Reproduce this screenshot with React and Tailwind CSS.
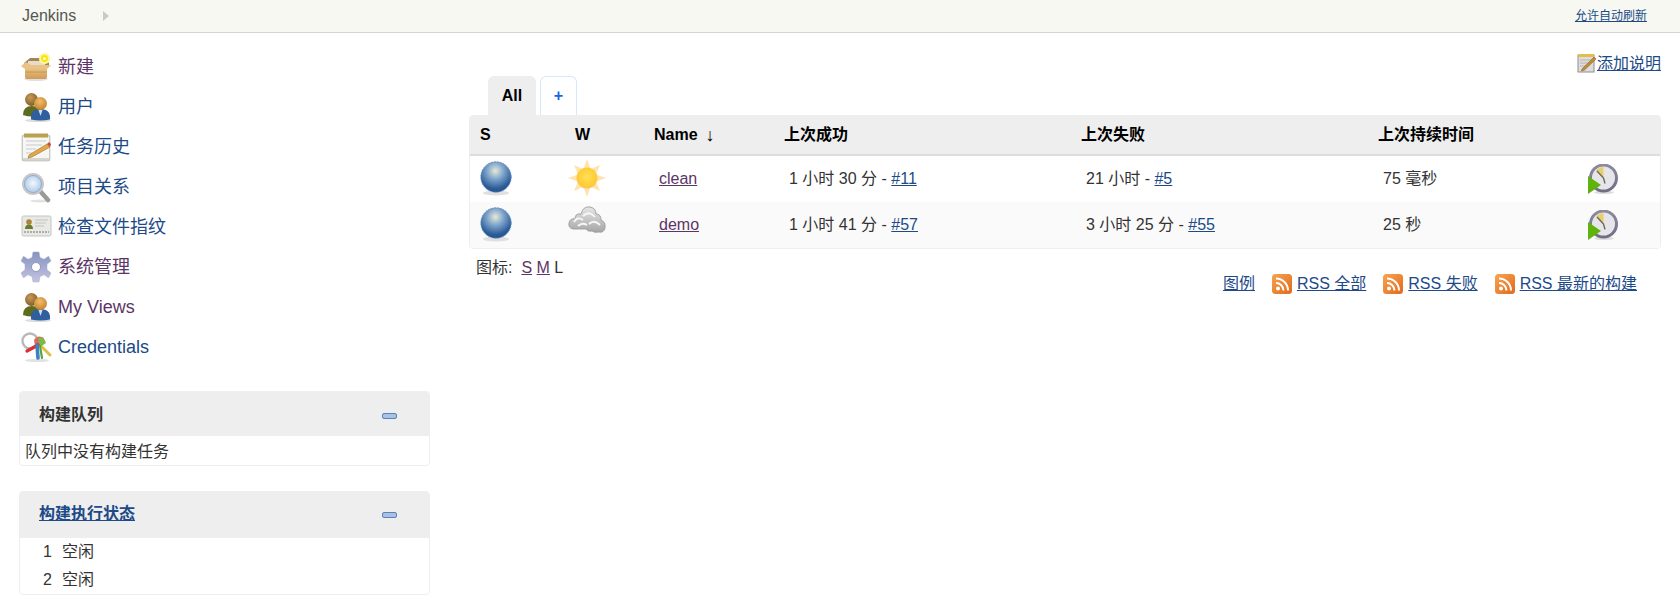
const blue = "text-[#204a87]";
const purple = "text-[#5c3566]";
const rowGrid = "grid grid-cols-[90px_79px_130px_298px_297px_1fr]";

function BoxIcon() {
  return (
    <svg width="32" height="32" viewBox="0 0 32 32">
      <defs>
        <linearGradient id="boxFront" x1="0" y1="0" x2="0" y2="1">
          <stop offset="0" stopColor="#efc988" />
          <stop offset="1" stopColor="#cf9c58" />
        </linearGradient>
      </defs>
      <ellipse cx="16" cy="28" rx="12" ry="2" fill="#e0e0e0" />
      <path d="M4 12 L10 7 H24 L29 12 V15 H4 Z" fill="#a88455" />
      <path d="M8 10 H25 V14 H8 Z" fill="#e6dccb" />
      <path d="M5 15 H27 V26 Q27 28 25 28 H7 Q5 28 5 26 Z" fill="url(#boxFront)" />
      <path d="M1 15 L6 11 L11 14 H26 L31 14.5 L27 18 H5 Z" fill="#e9c286" />
      <path d="M5 21 H27" stroke="#bd8f50" strokeWidth="0.8" />
      <circle cx="24.5" cy="7.5" r="5.5" fill="#fff59a" />
      <circle cx="24.5" cy="7.5" r="3.4" fill="#f7e600" />
      <circle cx="24.5" cy="7.5" r="1.5" fill="#fffde0" />
    </svg>
  );
}

function UsersIcon() {
  return (
    <svg width="32" height="32" viewBox="0 0 32 32">
      <defs>
        <radialGradient id="headBack" cx="0.4" cy="0.35" r="0.7">
          <stop offset="0" stopColor="#c69a5a" />
          <stop offset="1" stopColor="#805a24" />
        </radialGradient>
        <radialGradient id="headFront" cx="0.45" cy="0.35" r="0.7">
          <stop offset="0" stopColor="#f3bd6c" />
          <stop offset="1" stopColor="#c07f25" />
        </radialGradient>
      </defs>
      <ellipse cx="18" cy="29.5" rx="13" ry="1.6" fill="#ddd" />
      <path d="M3 24 Q3 15 12 15 Q20 15 20 24 Q12 27 3 24 Z" fill="#5c6b1d" />
      <circle cx="11.5" cy="8.5" r="6.5" fill="url(#headBack)" />
      <path d="M11 28.5 Q10 18 20.5 18 Q31 18 30 28.5 Q20 30.5 11 28.5 Z" fill="#2f5f9e" />
      <path d="M18.5 19 L20.5 25 L22.5 19 Z" fill="#cfe0f2" />
      <circle cx="20.5" cy="12.5" r="6.5" fill="url(#headFront)" />
    </svg>
  );
}

function NotepadIcon() {
  return (
    <svg width="32" height="32" viewBox="0 0 32 32">
      <rect x="2" y="4" width="28" height="26" rx="1.5" fill="#d5d5d0" stroke="#b5b5b0" strokeWidth="0.6" />
      <rect x="3" y="6" width="26" height="21" fill="#f6f6f4" />
      <rect x="4" y="2.5" width="24" height="4" fill="#b8a24e" />
      <path d="M6 10 H26 M6 14 H22 M6 18 H16 M6 22 H12" stroke="#c9c9c9" strokeWidth="1" />
      <path d="M9 24 L27 13 L30 16 L12 26 L8 27 Z" fill="#e0a84a" stroke="#9a6e28" strokeWidth="0.6" />
      <path d="M27 13 L30 16 L31 13 L29 11 Z" fill="#cf4a3c" />
    </svg>
  );
}

function SearchIcon() {
  return (
    <svg width="32" height="32" viewBox="0 0 32 32">
      <defs>
        <radialGradient id="lens" cx="0.5" cy="0.45" r="0.6">
          <stop offset="0" stopColor="#f3f8fd" />
          <stop offset="1" stopColor="#a9c6e6" />
        </radialGradient>
      </defs>
      <ellipse cx="20" cy="30" rx="10" ry="1.4" fill="#e2e2e2" />
      <path d="M20 20 L28 29" stroke="#9a9a9a" strokeWidth="4.5" strokeLinecap="round" />
      <circle cx="13" cy="13" r="11" fill="#c8c8c8" />
      <circle cx="13" cy="13" r="8.5" fill="url(#lens)" stroke="#7fa4d0" strokeWidth="0.8" />
    </svg>
  );
}

function CardIcon() {
  return (
    <svg width="32" height="32" viewBox="0 0 32 32">
      <rect x="2" y="5" width="29" height="20" rx="1.5" fill="#e8e8e4" stroke="#c4c4c0" strokeWidth="1" />
      <circle cx="9" cy="11" r="2.8" fill="#a9853c" />
      <path d="M5 18 Q5 13.5 9 13.5 Q13 13.5 13 18 Z" fill="#6c7a2a" />
      <path d="M15 9 H28 M15 12 H26 M15 15 H24" stroke="#c4c4c4" strokeWidth="1" />
      <path d="M4 21 H29" stroke="#9a9a9a" strokeWidth="1.6" strokeDasharray="2 1" />
    </svg>
  );
}

function GearIcon() {
  return (
    <svg width="32" height="32" viewBox="0 0 32 32">
      <defs>
        <linearGradient id="gearFill" x1="0" y1="0" x2="0" y2="1">
          <stop offset="0" stopColor="#8593bf" />
          <stop offset="1" stopColor="#c4c4e0" />
        </linearGradient>
      </defs>
      <path
        d="M13 1 H19 L20 6.5 L24 8.3 L28.5 5.2 L31 10 L27 13.3 V18.7 L31 22 L28.5 26.8 L24 23.7 L20 25.5 L19 31 H13 L12 25.5 L8 23.7 L3.5 26.8 L1 22 L5 18.7 V13.3 L1 10 L3.5 5.2 L8 8.3 L12 6.5 Z"
        fill="url(#gearFill)"
        stroke="#a5abcc"
        strokeWidth="0.5"
        strokeLinejoin="round"
      />
      <circle cx="16" cy="16" r="4.5" fill="#fff" stroke="#7f88b0" strokeWidth="0.8" />
    </svg>
  );
}

function KeysIcon() {
  return (
    <svg width="32" height="32" viewBox="0 0 32 32">
      <ellipse cx="17" cy="29.5" rx="12" ry="1.6" fill="#e2e2e2" />
      <circle cx="10" cy="10" r="7.5" fill="none" stroke="#b9b9b9" strokeWidth="2.4" />
      <path d="M19 13 L30 24" stroke="#d8c24a" strokeWidth="3" strokeLinecap="round" />
      <path d="M14 9 Q18 3 24 7 L21 15 L15 15 Z" fill="#d96a5c" />
      <path d="M18 7 Q24 5 26 12 L20 16 Z" fill="#7cb948" />
      <path d="M18 14 L7 20" stroke="#d92f2f" strokeWidth="3.2" strokeLinecap="round" />
      <path d="M17 14 L18 27" stroke="#3f7fc4" strokeWidth="3.6" strokeLinecap="round" />
      <path d="M20 15 L22 27" stroke="#5aa63c" strokeWidth="2.2" strokeLinecap="round" />
    </svg>
  );
}

function BallIcon() {
  return (
    <svg width="32" height="36" viewBox="0 0 32 36" className="block">
      <defs>
        <radialGradient id="ball" cx="0.48" cy="0.3" r="0.72">
          <stop offset="0" stopColor="#e6ead8" />
          <stop offset="0.4" stopColor="#7ba1ca" />
          <stop offset="0.8" stopColor="#2c5d9a" />
          <stop offset="1" stopColor="#234f88" />
        </radialGradient>
      </defs>
      <ellipse cx="16" cy="32" rx="13" ry="2.5" fill="#e0e0e0" />
      <circle cx="16" cy="16" r="15.2" fill="url(#ball)" stroke="#6f92bd" strokeWidth="1" strokeDasharray="2 1" />
    </svg>
  );
}

function SunIcon() {
  return (
    <svg width="38" height="38" viewBox="0 0 38 38" className="block">
      <defs>
        <radialGradient id="sun" cx="0.5" cy="0.45" r="0.55">
          <stop offset="0" stopColor="#ffe05a" />
          <stop offset="0.8" stopColor="#ffcc33" />
          <stop offset="1" stopColor="#fbc060" />
        </radialGradient>
      </defs>
      <g fill="#ffe3ab">
        <path d="M19 0 L22.5 10 H15.5 Z" />
        <path d="M19 38 L22.5 28 H15.5 Z" />
        <path d="M0 19 L10 15.5 V22.5 Z" />
        <path d="M38 19 L28 15.5 V22.5 Z" />
        <path d="M6 6 L15 10 L10 15 Z" />
        <path d="M32 6 L23 10 L28 15 Z" />
        <path d="M6 32 L15 28 L10 23 Z" />
        <path d="M32 32 L23 28 L28 23 Z" />
      </g>
      <circle cx="19" cy="19" r="10.5" fill="url(#sun)" />
    </svg>
  );
}

function CloudIcon() {
  return (
    <svg width="38" height="30" viewBox="0 0 38 30" className="block">
      <defs>
        <linearGradient id="cloud" x1="0" y1="0" x2="0" y2="1">
          <stop offset="0" stopColor="#e6e6e6" />
          <stop offset="1" stopColor="#a6a6a6" />
        </linearGradient>
      </defs>
      <path
        d="M5 24 Q0 23 1 18 Q2 13 7 14 Q7 8 13 9 Q15 1 22 2 Q28 3 28 9 Q33 9 33 15 Q38 17 37 23 Q36 28 31 27 Q26 28 24 26 Q20 27 18 24 Z"
        fill="url(#cloud)"
        stroke="#9d9d9d"
        strokeWidth="0.9"
      />
      <path d="M6 17 Q9 11 15 15 M15 11 Q21 5 27 12 M10 21 Q14 17 19 20 M21 19 Q26 14 32 20" fill="none" stroke="#f7f7f7" strokeWidth="1.8" />
    </svg>
  );
}

function ClockPlayIcon() {
  return (
    <svg width="30" height="31" viewBox="0 0 30 31" className="block">
      <defs>
        <linearGradient id="clockRing" x1="0" y1="0" x2="0" y2="1">
          <stop offset="0" stopColor="#8c8ba0" />
          <stop offset="1" stopColor="#6f6e84" />
        </linearGradient>
      </defs>
      <ellipse cx="16" cy="28.5" rx="10" ry="1.6" fill="#dedede" />
      <circle cx="15.5" cy="14" r="13" fill="#e6e6ea" stroke="url(#clockRing)" strokeWidth="3" />
      <path d="M15.5 14 L15.5 3 Q11 3 8 7 Z" fill="#e8cf6e" />
      <path d="M15.5 14 L9 7 M15.5 14 L17 19.5" stroke="#6e6d62" strokeWidth="1.4" />
      <path d="M0 12 L13 21 L0 30 Z" fill="#5fb30c" />
    </svg>
  );
}

function RssIcon() {
  return (
    <svg width="20" height="20" viewBox="0 0 20 20" className="shrink-0">
      <defs>
        <linearGradient id="rss" x1="0" y1="0" x2="1" y2="1">
          <stop offset="0" stopColor="#f6a552" />
          <stop offset="1" stopColor="#e2691c" />
        </linearGradient>
      </defs>
      <rect x="0" y="0" width="20" height="20" rx="3.5" fill="url(#rss)" />
      <circle cx="6" cy="14.5" r="2" fill="#fff" />
      <path d="M4 9 A7.5 7.5 0 0 1 11.5 16.5" fill="none" stroke="#fff" strokeWidth="2" />
      <path d="M4 4.5 A12 12 0 0 1 16 16.5" fill="none" stroke="#fff" strokeWidth="2" />
    </svg>
  );
}

function EditIcon() {
  return (
    <svg width="20" height="20" viewBox="0 0 20 20" className="shrink-0">
      <rect x="1" y="2" width="16" height="17" fill="#ddd" stroke="#8d8d8d" strokeWidth="1" />
      <rect x="1" y="1" width="16" height="3" fill="#e2bf4d" />
      <path d="M3 7 H15 M3 10 H12 M3 13 H9" stroke="#b5b5b5" strokeWidth="1" />
      <path d="M5 16 L17 4 L19 6 L7.5 17 L4.5 18 Z" fill="#c58a32" stroke="#7c5520" strokeWidth="0.5" />
    </svg>
  );
}

function MinusIcon() {
  return <span className="block w-[15px] h-[6px] rounded-[2px] bg-[#a9c1e2] border border-[#5a82ba]" />;
}

const navItems = [
  { icon: <BoxIcon />, label: "新建", color: purple },
  { icon: <UsersIcon />, label: "用户", color: blue },
  { icon: <NotepadIcon />, label: "任务历史", color: blue },
  { icon: <SearchIcon />, label: "项目关系", color: blue },
  { icon: <CardIcon />, label: "检查文件指纹", color: blue },
  { icon: <GearIcon />, label: "系统管理", color: purple },
  { icon: <UsersIcon />, label: "My Views", color: purple },
  { icon: <KeysIcon />, label: "Credentials", color: blue },
];

const jobs = [
  { name: "clean", weather: <SunIcon />, ok: "1 小时 30 分", okNo: "#11", fail: "21 小时", failNo: "#5", time: "75 毫秒" },
  { name: "demo", weather: <CloudIcon />, ok: "1 小时 41 分", okNo: "#57", fail: "3 小时 25 分", failNo: "#55", time: "25 秒", alt: true },
];

function Panel({ title, link, headerClass, children }) {
  return (
    <div className="border border-[#eeeeee] rounded-[4px] overflow-hidden">
      <div className={`flex items-center justify-between bg-[#eeeeee] pl-[19px] pr-[32px] ${headerClass}`}>
        <span className={`font-bold ${link ? `underline ${blue}` : "text-[#333]"}`}>{title}</span>
        <span className="mt-[2px]"><MinusIcon /></span>
      </div>
      {children}
    </div>
  );
}

export default function App() {
  return (
    <div className="h-[599px] overflow-hidden bg-white text-[16px] text-[#333] font-['Liberation_Sans','Noto_Sans_CJK_SC',sans-serif]">
      <header className="h-[33px] flex items-center justify-between bg-[#f6f8f1] border-b border-[#d3d7cf] pl-[22px] pr-[33px]">
        <div className="flex items-center">
          <span className="text-[#555753]">Jenkins</span>
          <span className="ml-[27px] w-0 h-0 border-y-[5px] border-y-transparent border-l-[6px] border-l-[#c8c8c8]" />
        </div>
        <a className={`text-[12px] underline ${blue}`}>允许自动刷新</a>
      </header>

      <div className="flex">
        <aside className="w-[469px] shrink-0 pl-[19px] pr-[39px] pt-[14px]">
          <nav>
            {navItems.map((item) => (
              <div key={item.label} className="h-[40px] flex items-center gap-[6px] pl-[1px]">
                {item.icon}
                <span className={`text-[18px] ${item.color}`}>{item.label}</span>
              </div>
            ))}
          </nav>
          <div className="mt-[24px]">
            <Panel title="构建队列" headerClass="h-[44px] pt-[2px]">
              <div className="h-[29px] flex items-center pl-[5px] pt-[2px]">队列中没有构建任务</div>
            </Panel>
          </div>
          <div className="mt-[25px]">
            <Panel title="构建执行状态" link headerClass="h-[46px] pb-[2px]">
              <div className="h-[28px] flex items-center pl-[23px] gap-[10px]"><span>1</span><span>空闲</span></div>
              <div className="h-[28px] flex items-center pl-[23px] gap-[10px]"><span>2</span><span>空闲</span></div>
            </Panel>
          </div>
        </aside>

        <main className="flex-1 pr-[19px] pt-[20px]">
          <div className="h-[23px] flex justify-end items-start">
            <EditIcon />
            <a className={`underline ${blue} mt-[-1px]`}>添加说明</a>
          </div>

          <div className="flex pl-[19px] gap-[4px]">
            <div className="w-[48px] h-[39px] flex items-center justify-center bg-[#eeeeee] rounded-t-[6px] font-bold text-black">All</div>
            <div className="w-[37px] h-[39px] flex items-center justify-center border border-b-0 border-[#d5e8ff] rounded-t-[6px] font-bold text-[#1a66e0]">+</div>
          </div>

          <div className="border border-[#eeeeee] rounded-[4px] overflow-hidden">
            <div className={`${rowGrid} h-[40px] items-center bg-[#eeeeee] border-b-2 border-[#dddddd] font-bold text-black`}>
              <span className="pl-[10px]">S</span>
              <span className="pl-[15px]">W</span>
              <span className="pl-[15px] flex items-center gap-[8px]">Name<span className="font-normal text-[18px]">↓</span></span>
              <span className="pl-[15px]">上次成功</span>
              <span className="pl-[14px]">上次失败</span>
              <span className="pl-[14px]">上次持续时间</span>
            </div>
            {jobs.map((job) => (
              <div key={job.name} className={`${rowGrid} h-[46px] items-center ${job.alt ? "bg-[#fafafa]" : "bg-white"}`}>
                <span className="pl-[10px]"><BallIcon /></span>
                <span className="pl-[8px] self-start pt-[3px]">{job.weather}</span>
                <a className={`pl-[20px] ${purple}`}><span className="underline">{job.name}</span></a>
                <span className="pl-[20px]">{job.ok} - <a className={`underline ${blue}`}>{job.okNo}</a></span>
                <span className="pl-[19px]">{job.fail} - <a className={`underline ${blue}`}>{job.failNo}</a></span>
                <span className="pl-[19px] flex items-center justify-between pr-[42px]">
                  {job.time}
                  <ClockPlayIcon />
                </span>
              </div>
            ))}
          </div>

          <div className="flex justify-between">
            <div className="pl-[7px] pt-[7px]">
              图标:<span className="ml-[9px]"><a className={`underline ${purple}`}>S</a> <a className={`underline ${purple}`}>M</a> L</span>
            </div>
            <div className="flex items-center gap-[17px] pr-[24px] pt-[23px]">
              <a className={`underline ${blue}`}>图例</a>
              {["RSS 全部", "RSS 失败", "RSS 最新的构建"].map((label) => (
                <span key={label} className="flex items-center gap-[5px]">
                  <RssIcon />
                  <a className={`underline ${blue}`}>{label}</a>
                </span>
              ))}
            </div>
          </div>
        </main>
      </div>
    </div>
  );
}
